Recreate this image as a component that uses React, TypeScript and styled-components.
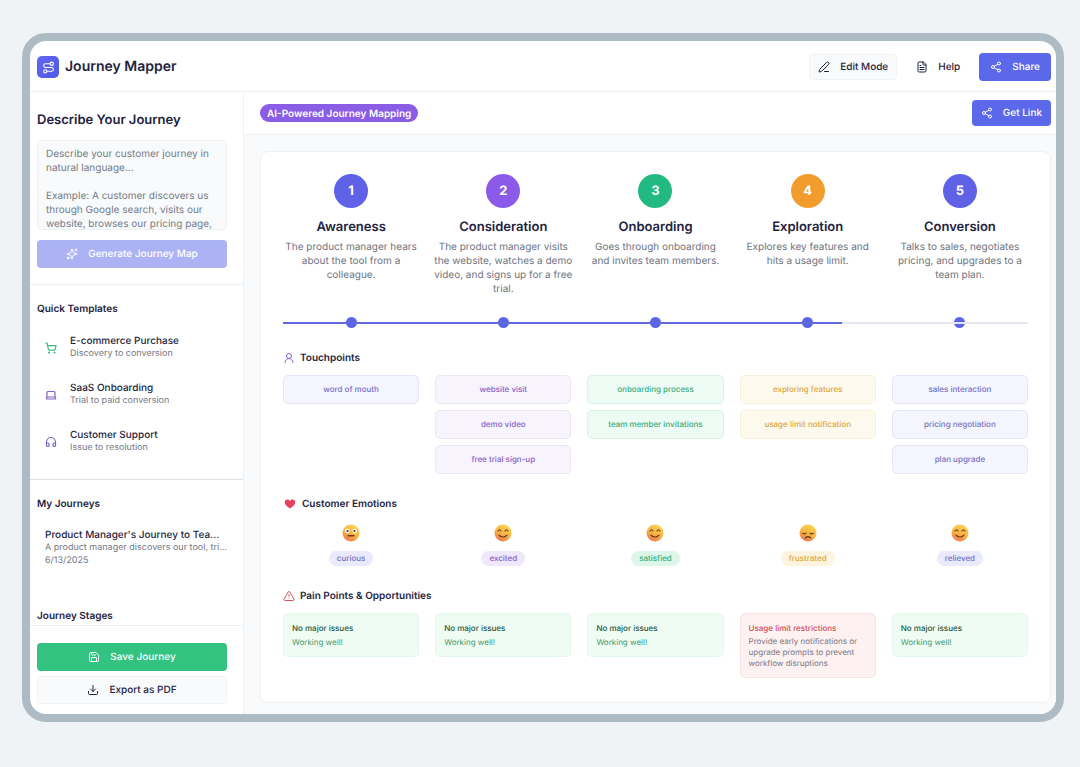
import React from "react";
import styled, { createGlobalStyle, css } from "styled-components";
import { Download, FileText, Headphones, Laptop, PenLine, Route, Save, Share2, ShoppingCart, Sparkles, TriangleAlert, UserRound } from "lucide-react";

const Global = createGlobalStyle`
  *, *::before, *::after { box-sizing: border-box; }
  body {
    margin: 0;
    background: #f0f3f5;
    color: #1e2340;
    font-family: Inter, "Liberation Sans", sans-serif;
    font-size: 10px;
    line-height: 14px;
    text-rendering: geometricPrecision;
  }
  button, textarea { font: inherit; color: inherit; text-rendering: inherit; }
  h1, h2, h3, p, ul { margin: 0; padding: 0; }
  ul { list-style: none; }
`;

const Page = styled.div`
  display: flex;
  min-height: 100vh;
  padding: 33px 16px 46px 22px;
`;

const Frame = styled.div`
  flex: 1;
  display: flex;
  flex-direction: column;
  min-width: 0;
  border: 8px solid #adbcc4;
  border-radius: 24px;
  background: #fff;
  overflow: hidden;
`;

const Header = styled.header`
  display: flex;
  align-items: center;
  justify-content: space-between;
  height: 51px;
  padding: 2px 5px 0 7px;
  border-bottom: 1px solid #edf0f4;
`;

const Brand = styled.div`
  display: flex;
  align-items: center;
  gap: 6px;
`;

const Logo = styled.span`
  display: grid;
  place-items: center;
  width: 22px;
  height: 22px;
  border-radius: 5px;
  background: linear-gradient(135deg, #6366f1, #4f5ae6);
  color: #fff;
`;

const BrandName = styled.h1`
  font-size: 14px;
  font-weight: 600;
  line-height: 20px;
`;

const Actions = styled.div`
  display: flex;
  align-items: center;
  gap: 8px;
`;

type Look = "primary" | "outline" | "ghost" | "success";
const looks = {
  primary: css`background: #5b68ea; color: #fff;`,
  outline: css`background: #f9fafc; border-color: #f0f2f6;`,
  ghost: css`background: transparent;`,
  success: css`background: #33c27f; color: #fff;`,
};

const Button = styled.button<{ $look: Look; $small?: boolean; $wide?: boolean }>`
  display: flex;
  align-items: center;
  justify-content: center;
  gap: 10px;
  width: ${(p) => (p.$wide ? "100%" : "auto")};
  height: ${(p) => (p.$small ? 26 : 28)}px;
  padding: 0 ${(p) => (p.$small ? 8 : 10)}px;
  border: 1px solid transparent;
  border-radius: 4px;
  font-weight: 500;
  cursor: pointer;
  ${(p) => looks[p.$look]}
  &:disabled { opacity: 0.5; cursor: default; }
`;

const Body = styled.div`
  flex: 1;
  display: flex;
`;

const Sidebar = styled.aside`
  flex: none;
  display: flex;
  flex-direction: column;
  width: 214px;
  border-right: 1px solid #edf0f4;
`;

const Panel = styled.section<{ $line?: string; $grow?: boolean }>`
  display: flex;
  flex-direction: column;
  flex: ${(p) => (p.$grow ? 1 : "none")};
  padding: ${(p) => (p.$grow ? "17px 16px 2px 7px" : "17px 16px 16px 7px")};
  border-bottom: ${(p) => (p.$line ? `1px solid ${p.$line}` : "none")};
`;

const DescribeTitle = styled.label`
  margin: 1px 0 10px;
  font-size: 13px;
  font-weight: 600;
  line-height: 20px;
`;

const Prompt = styled.textarea`
  display: block;
  width: 100%;
  height: 90px;
  margin-bottom: 10px;
  padding: 6px 8px 5px;
  border: 1px solid #eceff4;
  border-radius: 4px;
  background: #f8fafc;
  resize: none;
  overflow: hidden;
  &::placeholder { color: #757a85; opacity: 1; }
`;

const PanelTitle = styled.h2`
  font-size: 10px;
  font-weight: 600;
  line-height: 14px;
`;

const Templates = styled.ul`
  display: flex;
  flex-direction: column;
  gap: 4px;
  margin-top: 10px;
`;

const Template = styled.button`
  display: flex;
  align-items: center;
  gap: 13px;
  width: 100%;
  height: 43px;
  padding: 0 8px;
  border: 0;
  background: none;
  text-align: left;
  cursor: pointer;
`;

const ItemTitle = styled.span`
  display: block;
  font-size: 10px;
  font-weight: 500;
  line-height: 13px;
  white-space: nowrap;
`;

const ItemNote = styled.span`
  display: block;
  color: #737884;
  font-size: 9px;
  line-height: 12px;
  white-space: nowrap;
`;

const Journey = styled.button`
  display: flex;
  flex-direction: column;
  width: 100%;
  margin: 18px 0 42px;
  padding: 0 8px;
  border: 0;
  background: none;
  text-align: left;
  cursor: pointer;
  & > :last-child { margin-top: 1px; }
`;

const Footer = styled.div`
  display: flex;
  flex-direction: column;
  gap: 5px;
  padding: 17px 16px 10px 7px;
  border-top: 1px solid #edf0f4;
`;

const Main = styled.main`
  flex: 1;
  display: flex;
  flex-direction: column;
  min-width: 0;
  background: #f9fafc;
`;

const Toolbar = styled.div`
  display: flex;
  align-items: center;
  justify-content: space-between;
  height: 43px;
  padding: 0 5px 0 16px;
  border-bottom: 1px solid #edf0f4;
  background: #fff;
`;

const Badge = styled.span`
  padding: 3px 7px 1px;
  border-radius: 9px;
  background: #8b5ce6;
  color: #fff;
  font-weight: 600;
`;

const Card = styled.section`
  flex: 1;
  margin: 16px 5px 11px 16px;
  padding: 22px;
  border: 1px solid #edf1f5;
  border-radius: 8px;
  background: #fff;
`;

const Columns = styled.div`
  display: grid;
  grid-template-columns: repeat(5, minmax(0, 1fr));
  column-gap: 16px;
`;

const Stage = styled.div`
  display: flex;
  flex-direction: column;
  align-items: center;
  text-align: center;
`;

const StageNumber = styled.span<{ $color: string }>`
  display: grid;
  place-items: center;
  width: 34px;
  height: 34px;
  margin-bottom: 9px;
  border-radius: 50%;
  background: ${(p) => p.$color};
  color: #fff;
  font-size: 13px;
  font-weight: 700;
`;

const StageName = styled.h2`
  margin-bottom: 3px;
  font-size: 13px;
  font-weight: 600;
  line-height: 20px;
`;

const StageText = styled.p`
  align-self: stretch;
  margin: 0 -2px;
  color: #6e7380;
`;

const Timeline = styled.div`
  position: relative;
  margin-top: 21px;
`;

const Dot = styled.span`
  justify-self: center;
  width: 11px;
  height: 11px;
  border-radius: 50%;
  background: #5b64e6;
`;

const Track = styled.div`
  position: absolute;
  inset: 5px 0 auto;
  height: 2px;
  background: #e4e7f2;
`;

const Progress = styled.div`
  height: 100%;
  background: #6169de;
`;

const SectionTitle = styled.h3<{ $color: string }>`
  display: flex;
  align-items: center;
  gap: 5px;
  margin-top: 23px;
  font-size: 10px;
  font-weight: 600;
  line-height: 14px;
  svg { color: ${(p) => p.$color}; }
`;

const tones = {
  indigo: { fg: "#7471c4", bg: "#f4f5fe", line: "#e6e7f6", pill: "#e9eafb" },
  purple: { fg: "#8560c8", bg: "#f8f4fd", line: "#ece5f6", pill: "#efe7fb" },
  green: { fg: "#38ab7c", bg: "#edfbf5", line: "#d8f2e6", pill: "#dcf6ea" },
  amber: { fg: "#dda63a", bg: "#fef9ed", line: "#faf0da", pill: "#fdf3df" },
};
type Tone = keyof typeof tones;

const Touchpoints = styled.ul`
  display: flex;
  flex-direction: column;
  gap: 6px;
`;

const Touchpoint = styled.li<{ $tone: Tone }>`
  padding: 7px 4px;
  border: 1px solid ${(p) => tones[p.$tone].line};
  border-radius: 5px;
  background: ${(p) => tones[p.$tone].bg};
  color: ${(p) => tones[p.$tone].fg};
  font-size: 8px;
  font-weight: 500;
  line-height: 13px;
  text-align: center;
`;

const Emotion = styled.div`
  display: flex;
  flex-direction: column;
  align-items: center;
  gap: 9px;
`;

const Pill = styled.span<{ $tone: Tone }>`
  padding: 1px 8px;
  border-radius: 8px;
  background: ${(p) => tones[p.$tone].pill};
  color: ${(p) => tones[p.$tone].fg};
  font-size: 8px;
  font-weight: 500;
  line-height: 13px;
`;

const Grid = styled(Columns)<{ $space: number }>`
  align-items: start;
  margin-top: ${(p) => p.$space}px;
`;

const Note = styled.div<{ $alert?: boolean }>`
  padding: 7px 8px;
  border: 1px solid ${(p) => (p.$alert ? "#fbe4e5" : "#e4f9ec")};
  border-radius: 5px;
  background: ${(p) => (p.$alert ? "#fef1f2" : "#effcf4")};
  color: ${(p) => (p.$alert ? "#cf4a52" : "#23563f")};
  font-size: 8px;
  font-weight: 500;
  line-height: 14px;
`;

const NoteText = styled.p<{ $alert?: boolean }>`
  padding: 1px 0;
  color: ${(p) => (p.$alert ? "#797783" : "#3f9b6b")};
  font-weight: 400;
  line-height: ${(p) => (p.$alert ? 11 : 12)}px;
`;

type Mood = "flat" | "happy" | "sad";

function Face({ mood, id }: { mood: Mood; id: string }) {
  return (
    <svg width="18" height="18" viewBox="0 0 36 36" aria-hidden="true">
      <defs>
        <linearGradient id={id} x1="0.7" y1="0" x2="0.25" y2="1">
          <stop offset="0" stopColor="#fbd552" />
          <stop offset="0.55" stopColor="#f7b244" />
          <stop offset="1" stopColor="#ec7350" />
        </linearGradient>
      </defs>
      <circle cx="18" cy="18" r="17" fill={`url(#${id})`} />
      {mood === "flat" && (
        <>
          <circle cx="10.5" cy="14" r="4.6" fill="#fff" />
          <circle cx="25.5" cy="14" r="4.6" fill="#fff" />
          <circle cx="11" cy="14" r="2.2" fill="#4b3029" />
          <circle cx="25" cy="14" r="2.2" fill="#4b3029" />
          <path d="M12 23.5h12" stroke="#6b3b22" strokeWidth="2.6" strokeLinecap="round" />
        </>
      )}
      {mood === "happy" && (
        <path
          d="M8 14q3-5 6 0M22 14q3-5 6 0M10 22.5q8 7 16 0"
          fill="none" stroke="#6b3b22" strokeWidth="2.4" strokeLinecap="round"
        />
      )}
      {mood === "sad" && (
        <path
          d="M7.5 18.5q3.5 2.5 6.5 0M22 18.5q3 2.5 6.5 0M12.5 28q5.5-5 11 0"
          fill="none" stroke="#6b3b22" strokeWidth="2.4" strokeLinecap="round"
        />
      )}
    </svg>
  );
}

function HeartIcon() {
  return (
    <svg width="14" height="12" viewBox="0 0 28 24" aria-hidden="true">
      <path d="M14 21C8 17 3.5 13 3.5 8.5 3.5 5 6 3 8.8 3 11 3 13 4.200 14 6.2 15 4.200 17 3 19.2 3 22 3 24.500 5 24.5 8.5 24.5 13 20 17 14 21Z" fill="#e8405f" />
    </svg>
  );
}

const stages: {
  name: string; text: string; color: string; tone: Tone; touchpoints: string[];
  mood: Mood; emotion: string; issue?: { title: string; text: string };
}[] = [
  { name: "Awareness", text: "The product manager hears about the tool from a colleague.", color: "#5f62e6", tone: "indigo", touchpoints: ["word of mouth"], mood: "flat", emotion: "curious" },
  { name: "Consideration", text: "The product manager visits the website, watches a demo video, and signs up for a free trial.", color: "#8b5ae8", tone: "purple", touchpoints: ["website visit", "demo video", "free trial sign-up"], mood: "happy", emotion: "excited" },
  { name: "Onboarding", text: "Goes through onboarding and invites team members.", color: "#23b982", tone: "green", touchpoints: ["onboarding process", "team member invitations"], mood: "happy", emotion: "satisfied" },
  { name: "Exploration", text: "Explores key features and hits a usage limit.", color: "#f29c2d", tone: "amber", touchpoints: ["exploring features", "usage limit notification"], mood: "sad", emotion: "frustrated", issue: { title: "Usage limit restrictions", text: "Provide early notifications or upgrade prompts to prevent workflow disruptions" } },
  { name: "Conversion", text: "Talks to sales, negotiates pricing, and upgrades to a team plan.", color: "#5f62e6", tone: "indigo", touchpoints: ["sales interaction", "pricing negotiation", "plan upgrade"], mood: "happy", emotion: "relieved" },
];

const templates = [
  { title: "E-commerce Purchase", note: "Discovery to conversion", icon: <ShoppingCart size={12} strokeWidth={2.4} color="#3fba86" /> },
  { title: "SaaS Onboarding", note: "Trial to paid conversion", icon: <Laptop size={12} strokeWidth={2.4} color="#8762d0" /> },
  { title: "Customer Support", note: "Issue to resolution", icon: <Headphones size={12} strokeWidth={2.4} color="#7468c8" /> },
];

const promptHint =
  "Describe your customer journey in natural language...\n\nExample: A customer discovers us through Google search, visits our website, browses our pricing page,";

export default function App() {
  const progress = 75;
  return (
    <>
      <Global />
      <Page>
        <Frame>
          <Header>
            <Brand>
              <Logo><Route size={13} /></Logo>
              <BrandName>Journey Mapper</BrandName>
            </Brand>
            <Actions>
              <Button $look="outline" $small><PenLine size={12} />Edit Mode</Button>
              <Button $look="ghost"><FileText size={12} />Help</Button>
              <Button $look="primary"><Share2 size={12} />Share</Button>
            </Actions>
          </Header>
          <Body>
            <Sidebar>
              <Panel $line="#edf0f4">
                <DescribeTitle htmlFor="prompt">Describe Your Journey</DescribeTitle>
                <Prompt id="prompt" placeholder={promptHint} />
                <Button $look="primary" $wide disabled><Sparkles size={12} />Generate Journey Map</Button>
              </Panel>
              <Panel $line="#dde1e6">
                <PanelTitle>Quick Templates</PanelTitle>
                <Templates>
                  {templates.map((t) => (
                    <li key={t.title}>
                      <Template>
                        {t.icon}
                        <span><ItemTitle>{t.title}</ItemTitle><ItemNote>{t.note}</ItemNote></span>
                      </Template>
                    </li>
                  ))}
                </Templates>
              </Panel>
              <Panel $grow>
                <PanelTitle>My Journeys</PanelTitle>
                <Journey>
                  <ItemTitle>Product Manager's Journey to Tea...</ItemTitle>
                  <ItemNote>A product manager discovers our tool, tri...</ItemNote>
                  <ItemNote>6/13/2025</ItemNote>
                </Journey>
                <PanelTitle>Journey Stages</PanelTitle>
              </Panel>
              <Footer>
                <Button $look="success" $wide><Save size={12} />Save Journey</Button>
                <Button $look="outline" $wide><Download size={12} />Export as PDF</Button>
              </Footer>
            </Sidebar>
            <Main>
              <Toolbar>
                <Badge>AI-Powered Journey Mapping</Badge>
                <Button $look="primary" $small><Share2 size={12} />Get Link</Button>
              </Toolbar>
              <Card>
                <Columns>
                  {stages.map((s, i) => (
                    <Stage key={s.name}>
                      <StageNumber $color={s.color}>{i + 1}</StageNumber>
                      <StageName>{s.name}</StageName>
                      <StageText>{s.text}</StageText>
                    </Stage>
                  ))}
                </Columns>
                <Timeline>
                  <Columns>{stages.map((s) => <Dot key={s.name} />)}</Columns>
                  <Track><Progress style={{ width: `${progress}%` }} /></Track>
                </Timeline>
                <SectionTitle $color="#8563d2"><UserRound size={12} />Touchpoints</SectionTitle>
                <Grid $space={10}>
                  {stages.map((s) => (
                    <Touchpoints key={s.name}>
                      {s.touchpoints.map((t) => <Touchpoint key={t} $tone={s.tone}>{t}</Touchpoint>)}
                    </Touchpoints>
                  ))}
                </Grid>
                <SectionTitle $color="#e8405f"><HeartIcon />Customer Emotions</SectionTitle>
                <Grid $space={13}>
                  {stages.map((s, i) => (
                    <Emotion key={s.name}>
                      <Face mood={s.mood} id={`face-${i}`} />
                      <Pill $tone={s.tone}>{s.emotion}</Pill>
                    </Emotion>
                  ))}
                </Grid>
                <SectionTitle $color="#d2545c"><TriangleAlert size={12} />Pain Points &amp; Opportunities</SectionTitle>
                <Grid $space={10}>
                  {stages.map((s) => (
                    <Note key={s.name} $alert={!!s.issue}>
                      {s.issue ? s.issue.title : "No major issues"}
                      <NoteText $alert={!!s.issue}>{s.issue ? s.issue.text : "Working well!"}</NoteText>
                    </Note>
                  ))}
                </Grid>
              </Card>
            </Main>
          </Body>
        </Frame>
      </Page>
    </>
  );
}
